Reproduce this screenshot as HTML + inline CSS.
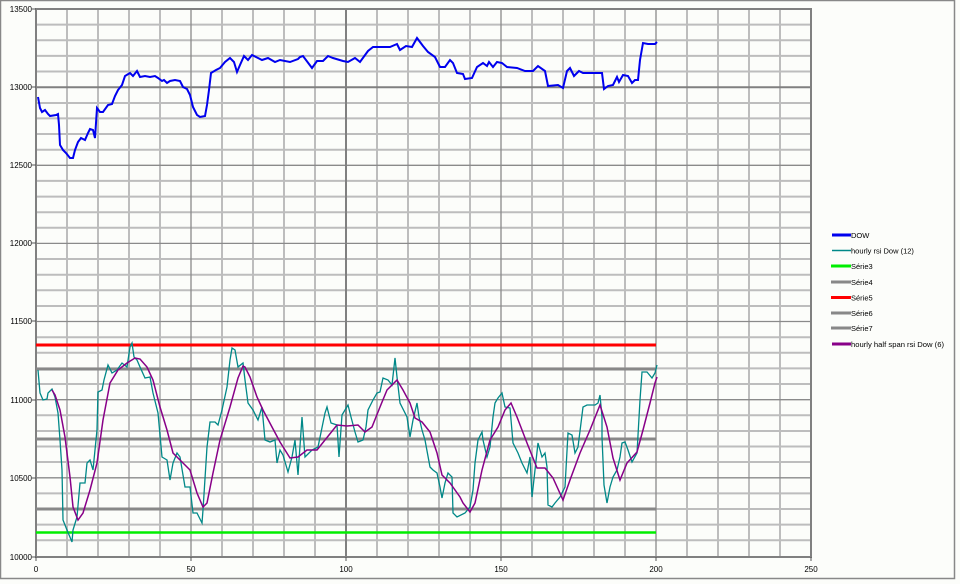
<!DOCTYPE html>
<html><head><meta charset="utf-8"><style>
html,body{margin:0;padding:0;background:#fcfdfa;}
svg{display:block;font-family:"Liberation Sans",sans-serif;}
</style></head><body>
<svg width="960" height="584" viewBox="0 0 960 584" xmlns="http://www.w3.org/2000/svg">
<rect x="0" y="0" width="960" height="584" fill="#fcfdfa"/>
<rect x="0.5" y="0.5" width="954" height="578" fill="none" stroke="#888" stroke-width="1.5"/>
<g stroke="#bdbdbd" stroke-width="2">
<path d="M67,9V557M98,9V557M129,9V557M160,9V557M222,9V557M253,9V557M284,9V557M315,9V557M377,9V557M408,9V557M439,9V557M470,9V557M532,9V557M563,9V557M594,9V557M625,9V557M687,9V557M718,9V557M749,9V557M780,9V557"/>
<path d="M36,24.6H811M36,40.3H811M36,55.9H811M36,71.5H811M36,103H811M36,118.4H811M36,134H811M36,149.7H811M36,180.9H811M36,196.6H811M36,212.2H811M36,227.8H811M36,259H811M36,274.7H811M36,290.3H811M36,306H811M36,337.2H811M36,352.8H811M36,368.4H811M36,384H811M36,415.3H811M36,431H811M36,446.5H811M36,462H811M36,493.4H811M36,509H811M36,524.6H811M36,540.2H811"/>
</g>
<g stroke="#8a8a8a" stroke-width="1.3">
<path d="M191,9V557M501,9V557M656,9V557"/>
<path d="M36,165.3H811M36,243.4H811M36,321.5H811M36,399.7H811M36,477.8H811"/>
</g>
<g stroke="#808080" stroke-width="2">
<path d="M346,9V557M36,87.2H811"/>
</g>
<rect x="36" y="9" width="775" height="548" fill="none" stroke="#808080" stroke-width="2"/>
<g stroke="#555" stroke-width="1"><path d="M32,9H36M32,87H36M32,165H36M32,243H36M32,321H36M32,400H36M32,478H36M32,557H36M36,557V561M191,557V561M346,557V561M501,557V561M656,557V561M811,557V561"/></g>
<g font-size="8" fill="#000" text-anchor="end">
<text x="32" y="12">13500</text><text x="32" y="90">13000</text><text x="32" y="168">12500</text><text x="32" y="246">12000</text><text x="32" y="324">11500</text><text x="32" y="403">11000</text><text x="32" y="481">10500</text><text x="32" y="560">10000</text>
</g>
<g font-size="8" fill="#000" text-anchor="middle">
<text x="36" y="572">0</text><text x="191" y="572">50</text><text x="346" y="572">100</text><text x="501" y="572">150</text><text x="656" y="572">200</text><text x="811" y="572">250</text>
</g>
<g stroke-width="3">
<path d="M36,345H656" stroke="#ff0000"/>
<path d="M36,369H656" stroke="#888"/>
<path d="M36,439H656" stroke="#888"/>
<path d="M36,509H656" stroke="#888"/>
<path d="M36,532.5H656" stroke="#00ee00" stroke-width="2.5"/>
</g>
<polyline fill="none" stroke="#0000ee" stroke-width="2" points="38,97 40,108 42,112 45,110 48,114 50,116 56,115 58,114 59,125 60,145 63,150 66,153 70,158 73,158 75,150 78,142 81,138 85,140 88,133 90,129 93,130 95,138 97,108 100,112 103,112 108,105 112,104 115,96 118,90 122,85 125,76 130,73 133,76 137,71 140,77 145,76 150,77 155,76 158,78 162,81 164,80 167,83 170,81 175,80 180,81 183,87 187,89 190,95 193,107 197,115 200,117 205,116 207,105 209,90 211,73 216,70 220,68 225,62 230,58 234,62 237,72 240,65 244,56 248,60 252,55 258,58 262,60 268,58 275,62 280,60 290,62 298,59 300,57 303,56 312,68 317,61 323,61 328,56 333,58 343,61 348,62 355,58 360,62 368,51 373,47 378,47 390,47 397,44 400,50 406,46 412,47 417,38 423,46 428,52 435,57 440,67 445,67 450,60 453,63 457,73 463,74 465,79 472,78 477,67 483,63 487,66 489,62 493,67 497,62 502,63 507,67 517,68 525,71 533,71 538,66 545,71 548,86 558,85 563,88 567,71 570,68 574,76 579,71 583,73 602,73 604,89 608,86 613,85 617,77 619,82 623,75 628,76 632,83 635,80 638,80 640,60 643,43 648,44 655,44 657,42"/>
<polyline fill="none" stroke="#008888" stroke-width="1.3" points="38,370 40,393 43,400 47,399 48,393 52,389 55,397 58,413 60,440 62,470 63,520 67,530 72,542 73,530 77,517 80,483 85,483 87,463 90,460 93,470 97,430 98,392 102,390 104,380 108,365 112,373 117,370 122,363 127,367 130,347 132,343 134,357 137,360 140,367 145,378 150,377 153,393 158,413 162,457 167,460 170,480 173,463 177,453 180,457 185,487 190,487 193,513 197,513 202,523 203,510 207,447 210,422 215,422 218,425 222,410 227,387 230,360 232,348 235,350 238,367 243,363 245,380 248,403 253,410 258,420 262,407 265,440 270,442 275,440 277,463 280,450 283,455 288,472 292,457 295,440 298,475 302,417 305,457 312,450 318,447 325,413 327,407 331,423 337,425 339,457 342,415 348,405 351,417 355,432 358,442 363,440 366,427 368,410 373,400 377,393 380,392 383,378 388,380 392,385 395,358 397,377 400,403 407,417 410,437 413,420 417,403 419,417 422,430 425,440 430,467 433,470 437,473 440,487 442,498 445,483 448,473 452,477 453,513 457,517 465,513 470,507 473,490 475,463 478,440 482,432 483,440 487,457 490,447 493,417 495,403 498,398 502,393 505,407 510,408 513,443 518,453 522,463 527,473 530,457 532,497 535,470 538,443 542,457 545,453 547,467 548,505 552,507 555,503 560,497 565,487 568,433 572,435 575,453 578,447 583,407 587,405 595,405 598,403 600,395 602,417 602,437 604,485 607,503 610,487 613,477 617,470 620,457 622,443 625,442 628,450 632,462 637,453 640,400 642,372 647,372 652,378 655,373 657,365"/>
<polyline fill="none" stroke="#880088" stroke-width="1.5" points="52,390 55,395 60,410 65,437 70,477 73,507 78,520 83,513 90,490 97,463 103,420 110,383 118,370 127,363 135,358 140,359 147,367 153,380 160,407 167,430 173,453 182,462 190,470 197,493 203,507 207,503 213,473 220,440 230,407 238,378 243,366 245,367 250,377 257,397 263,410 272,427 280,442 290,458 298,457 307,450 317,450 325,440 337,425 347,426 358,425 365,432 372,427 380,407 387,390 397,380 403,390 410,403 415,418 422,422 430,432 437,453 442,475 450,483 460,497 463,503 470,512 475,503 482,470 490,440 498,427 505,410 511,403 517,417 527,443 537,468 545,468 553,478 563,500 570,480 580,453 590,430 600,405 607,427 613,458 620,480 627,463 637,452 643,430 650,403 655,383 657,377"/>
<g stroke-width="3">
<path d="M832,235H851" stroke="#0000ee"/>
<path d="M832,250.5H851" stroke="#008888" stroke-width="1.5"/>
<path d="M831,266H851" stroke="#00ee00"/>
<path d="M831,282H851" stroke="#888"/>
<path d="M831,297.5H851" stroke="#ff0000"/>
<path d="M831,313H851" stroke="#888"/>
<path d="M831,328H851" stroke="#888"/>
<path d="M832,344H851" stroke="#880088"/>
</g>
<g font-size="7.5" fill="#000">
<text x="851" y="238">DOW</text>
<text x="851" y="253.5">hourly rsi Dow (12)</text>
<text x="851" y="269">Série3</text>
<text x="851" y="285">Série4</text>
<text x="851" y="300.5">Série5</text>
<text x="851" y="316">Série6</text>
<text x="851" y="331">Série7</text>
<text x="851" y="347" textLength="93" lengthAdjust="spacingAndGlyphs">hourly half span rsi Dow (6)</text>
</g>
</svg>
</body></html>
